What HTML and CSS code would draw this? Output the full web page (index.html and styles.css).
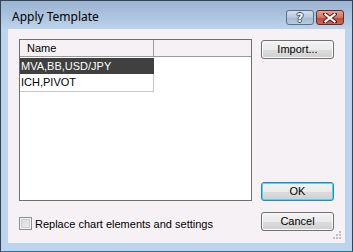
FILE: index.html
```html
<!DOCTYPE html>
<html lang="en">
<head>
    <meta charset="UTF-8">
    <title>Apply Template</title>
    <link rel="stylesheet" href="styles.css">
</head>
<body>
    <div class="window">
        <div class="titlebar">
            <span class="title">Apply Template</span>
            <div class="captionButtons">
                <div class="cap help"><span>?</span></div>
                <div class="cap close">
                    <svg width="14" height="10" viewBox="0 0 14 10">
                        <path d="M2 1 L12 9 M12 1 L2 9" stroke="#5a1a14" stroke-width="4" stroke-linecap="square"/>
                        <path d="M2.5 1.5 L11.5 8.5 M11.5 1.5 L2.5 8.5" stroke="#fff" stroke-width="2.2" stroke-linecap="square"/>
                    </svg>
                </div>
            </div>
        </div>
        <div class="client">
            <div class="list">
                <div class="listHead">
                    <div class="headCell">Name</div>
                    <div class="headRest"></div>
                </div>
                <div class="row selected">MVA,BB,USD/JPY</div>
                <div class="row">ICH,PIVOT</div>
            </div>
            <div class="sideButtons">
                <div class="btn">Import...</div>
                <div class="btn default">OK</div>
            </div>
            <label class="check"><span class="box"></span>Replace chart elements and settings</label>
            <div class="btn">Cancel</div>
            <svg class="grip" width="10" height="10" viewBox="0 0 10 10">
                <rect x="7" y="1" width="2" height="2" fill="#c4c0c4"/>
                <rect x="4" y="4" width="2" height="2" fill="#c4c0c4"/>
                <rect x="7" y="4" width="2" height="2" fill="#c4c0c4"/>
                <rect x="1" y="7" width="2" height="2" fill="#c4c0c4"/>
                <rect x="4" y="7" width="2" height="2" fill="#c4c0c4"/>
                <rect x="7" y="7" width="2" height="2" fill="#c4c0c4"/>
            </svg>
        </div>
    </div>
</body>
</html>
```

FILE: styles.css
```css
body {
    margin: 0;
    font-family: "Liberation Sans", Arial, sans-serif;
    font-size: 11px;
    color: #000;
}

.window {
    width: 353px;
    height: 252px;
    box-sizing: border-box;
    border: 1px solid #38434f;
    border-bottom-color: #1f7f8f;
    background: #bdd4ee;
    display: flex;
    flex-direction: column;
}

.titlebar {
    height: 28px;
    display: flex;
    align-items: flex-start;
    background: linear-gradient(#9ab3d0, #b2c9e4 70%, #bcd3ee);
}

.title {
    font-family: "Noto Sans", sans-serif;
    font-size: 12px;
    margin: 7px 0 0 11px;
    color: #000;
}

.captionButtons {
    margin: 9px 8px 0 auto;
    display: flex;
    gap: 2px;
}

.cap {
    width: 26px;
    height: 13px;
    border: 1px solid #5b6e84;
    border-radius: 3px;
    display: flex;
    align-items: center;
    justify-content: center;
}

.help {
    background: linear-gradient(#d3e0ee, #b5c8de 50%, #a2b8d1 51%, #b8cce2);
}

.help span {
    font-family: "DejaVu Sans", sans-serif;
    font-weight: bold;
    font-size: 12px;
    line-height: 12px;
    color: #fff;
    text-shadow: 1px 0 #3b4e66, -1px 0 #3b4e66, 0 1px #3b4e66, 0 -1px #3b4e66;
}

.close {
    border-color: #6b2a22;
    background: linear-gradient(#e0a497, #cf7466 50%, #bb4a3a 51%, #c8685a);
}

.client {
    position: relative;
    flex: 1;
    margin: 0 7px 8px;
    background: #f5f1f5;
    padding: 10px 11px 0;
    display: grid;
    grid-template-columns: 233px 73px;
    grid-template-rows: 162px auto;
    column-gap: 9px;
    row-gap: 11px;
}

.list {
    border: 1px solid #6e6e6e;
    background: #fff;
    box-sizing: border-box;
}

.listHead {
    display: flex;
    height: 16px;
    background: #f5f1f5;
    border-bottom: 1px solid #9a9a9a;
    margin-bottom: 1px;
}

.headCell {
    width: 134px;
    border-right: 1px solid #9a9a9a;
    padding-left: 7px;
    box-sizing: border-box;
    line-height: 16px;
}

.headRest {
    flex: 1;
}

.row {
    width: 134px;
    height: 16px;
    line-height: 16px;
    padding-left: 1px;
    box-sizing: border-box;
}

.row.selected {
    background: #404040;
    color: #fff;
}

.row:not(.selected) {
    height: 18px;
    line-height: 17px;
    border-right: 1px solid #c8c8c8;
    border-bottom: 1px solid #c8c8c8;
}

.sideButtons {
    display: flex;
    flex-direction: column;
    justify-content: space-between;
    padding-top: 1px;
    padding-bottom: 0;
}

.btn {
    height: 19px;
    box-sizing: border-box;
    border: 1px solid #707070;
    border-radius: 3px;
    background: linear-gradient(#f2f2f2, #ebebeb 50%, #dddddd 51%, #cfcfcf);
    box-shadow: inset 0 0 0 1px #fbfbfb;
    display: flex;
    align-items: center;
    justify-content: center;
    line-height: 13px;
}

.btn.default {
    border-color: #3c7fb1;
    box-shadow: inset 0 0 0 1px #48d8fb;
}

.check {
    display: flex;
    align-items: center;
    gap: 3px;
    height: 19px;
    margin-top: 2px;
}

.box {
    width: 13px;
    height: 13px;
    box-sizing: border-box;
    border: 1px solid #8f8f8f;
    background: linear-gradient(135deg, #d4d4d4, #f2f2f2);
    box-shadow: inset 0 0 0 1px #f4f4f4, inset 0 0 0 2px #cfcfcf;
}

.grip {
    position: absolute;
    right: 3px;
    bottom: 3px;
}
```
